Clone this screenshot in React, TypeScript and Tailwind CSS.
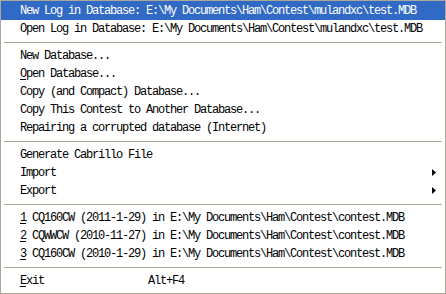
import React from "react";

const F = { fontFamily: '"Liberation Mono", "DejaVu Sans Mono", monospace' };

function U({ c }: { c: string }) {
  return <span className="underline underline-offset-2 decoration-1">{c}</span>;
}

function Row({ children, hl, arrow, shortcut }: { children: React.ReactNode; hl?: boolean; arrow?: boolean; shortcut?: string }) {
  return (
    <div className={`relative flex items-center h-[18px] pl-[19px] pr-2 whitespace-pre ${hl ? "bg-[#316ac5] text-white h-[19px]" : "text-black"}`}>
      <span className="w-[128px] shrink-0">{children}</span>
      {shortcut && <span>{shortcut}</span>}
      {arrow && (
        <svg className="absolute right-[9px] top-[5px]" width="4" height="7" viewBox="0 0 4 7">
          <path d="M0 0 L4 3.5 L0 7 Z" fill="#000" />
        </svg>
      )}
    </div>
  );
}

function Sep() {
  return (
    <div className="h-[9px] flex items-center px-[3px]">
      <div className="h-px w-full bg-[#aca899]" />
    </div>
  );
}

export default function App() {
  return (
    <div
      className="w-[446px] h-[294px] bg-white border border-[#aca899] text-[12px] leading-none tracking-[-1.2px] overflow-hidden"
      style={F}
    >
      <Row hl>New Log in Database: E:\My Documents\Ham\Contest\mulandxc\test.MDB</Row>
      <Row>Open Log in Database: E:\My Documents\Ham\Contest\mulandxc\test.MDB</Row>
      <Sep />
      <Row>New Database...</Row>
      <Row><U c="O" />pen Database...</Row>
      <Row>Copy (and Compact) Database...</Row>
      <Row>Copy This Contest to Another Database...</Row>
      <Row>Repairing a corrupted database (Internet)</Row>
      <Sep />
      <Row>Generate Cabrillo File</Row>
      <Row arrow>Import</Row>
      <Row arrow>Export</Row>
      <Sep />
      <Row><U c="1" /> CQ160CW (2011-1-29) in E:\My Documents\Ham\Contest\contest.MDB</Row>
      <Row><U c="2" /> CQWWCW (2010-11-27) in E:\My Documents\Ham\Contest\contest.MDB</Row>
      <Row><U c="3" /> CQ160CW (2010-1-29) in E:\My Documents\Ham\Contest\contest.MDB</Row>
      <Sep />
      <Row shortcut="Alt+F4"><U c="E" />xit</Row>
    </div>
  );
}
